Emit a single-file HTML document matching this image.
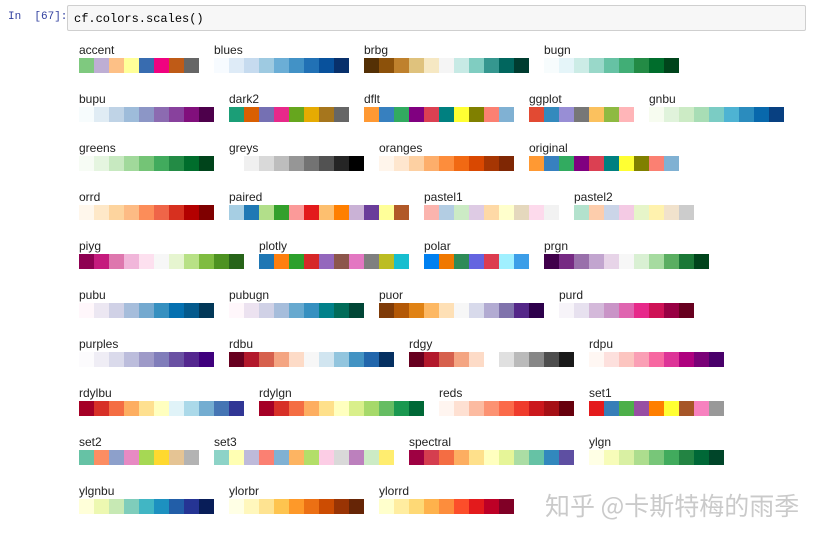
<!DOCTYPE html>
<html><head><meta charset="utf-8"><style>
body{margin:0;width:817px;height:536px;background:#fff;position:relative;overflow:hidden;font-family:"Liberation Sans",Arial,sans-serif}
.prompt{position:absolute;left:8px;top:11px;font:11px "Liberation Mono",monospace;color:#303f9f}
.cell{position:absolute;left:67px;top:5px;width:739px;height:26px;background:#f7f7f7;border:1px solid #cfcfcf;border-radius:2px;box-sizing:border-box;font:12px "Liberation Mono",monospace;color:#000;padding:6px 6px}
.row{position:absolute;left:79px;display:flex;gap:15px}
.it .l{font-size:12px;color:#222;height:15px;line-height:15px}
.sw{display:flex}.sw i{display:block;width:15px;height:15px}
.wm{position:absolute;left:545px;top:487px;font:25px "Noto Sans CJK SC",sans-serif;color:rgba(150,150,150,.5)}
</style></head><body>
<div class="prompt">In&nbsp;&nbsp;[67]:</div>
<div class="cell">cf.colors.scales()</div>
<div id="c"></div>
<div class="wm">知乎 @卡斯特梅的雨季</div>
<script>
const P={
accent:"7fc97f beaed4 fdc086 ffff99 386cb0 f0027f bf5b17 666666",
blues:"f7fbff deebf7 c6dbef 9ecae1 6baed6 4292c6 2171b5 08519c 08306b",
brbg:"543005 8c510a bf812d dfc27d f6e8c3 f5f5f5 c7eae5 80cdc1 35978f 01665e 003c30",
bugn:"f7fcfd e5f5f9 ccece6 99d8c9 66c2a4 41ae76 238b45 006d2c 00441b",
bupu:"f7fcfd e0ecf4 bfd3e6 9ebcda 8c96c6 8c6bb1 88419d 810f7c 4d004b",
dark2:"1b9e77 d95f02 7570b3 e7298a 66a61e e6ab02 a6761d 666666",
dflt:"ff9933 3780bf 32ab60 800080 db4052 008080 ffff33 808000 fb8072 80b1d3",
ggplot:"e24a33 348abd 988ed5 777777 fbc15e 8eba42 ffb5b8",
gnbu:"f7fcf0 e0f3db ccebc5 a8ddb5 7bccc4 4eb3d3 2b8cbe 0868ac 084081",
greens:"f7fcf5 e5f5e0 c7e9c0 a1d99b 74c476 41ab5d 238b45 006d2c 00441b",
greys:"ffffff f0f0f0 d9d9d9 bdbdbd 969696 737373 525252 252525 000000",
oranges:"fff5eb fee6ce fdd0a2 fdae6b fd8d3c f16913 d94801 a63603 7f2704",
original:"ff9933 3780bf 32ab60 800080 db4052 008080 ffff33 808000 fb8072 80b1d3",
orrd:"fff7ec fee8c8 fdd49e fdbb84 fc8d59 ef6548 d7301f b30000 7f0000",
paired:"a6cee3 1f78b4 b2df8a 33a02c fb9a99 e31a1c fdbf6f ff7f00 cab2d6 6a3d9a ffff99 b15928",
pastel1:"fbb4ae b3cde3 ccebc5 decbe4 fed9a6 ffffcc e5d8bd fddaec f2f2f2",
pastel2:"b3e2cd fdcdac cbd5e8 f4cae4 e6f5c9 fff2ae f1e2cc cccccc",
piyg:"8e0152 c51b7d de77ae f1b6da fde0ef f7f7f7 e6f5d0 b8e186 7fbc41 4d9221 276419",
plotly:"1f77b4 ff7f0e 2ca02c d62728 9467bd 8c564b e377c2 7f7f7f bcbd22 17becf",
polar:"0080f0 f07800 2e8b57 6464e0 dc3c50 a0f0ff 3c9ee8",
prgn:"40004b 762a83 9970ab c2a5cf e7d4e8 f7f7f7 d9f0d3 a6dba0 5aae61 1b7837 00441b",
pubu:"fff7fb ece7f2 d0d1e6 a6bddb 74a9cf 3690c0 0570b0 045a8d 023858",
pubugn:"fff7fb ece2f0 d0d1e6 a6bddb 67a9cf 3690c0 02818a 016c59 014636",
puor:"7f3b08 b35806 e08214 fdb863 fee0b6 f7f7f7 d8daeb b2abd2 8073ac 542788 2d004b",
purd:"f7f4f9 e7e1ef d4b9da c994c7 df65b0 e7298a ce1256 980043 67001f",
purples:"fcfbfd efedf5 dadaeb bcbddc 9e9ac8 807dba 6a51a3 54278f 3f007d",
rdbu:"67001f b2182b d6604d f4a582 fddbc7 f7f7f7 d1e5f0 92c5de 4393c3 2166ac 053061",
rdgy:"67001f b2182b d6604d f4a582 fddbc7 ffffff e0e0e0 bababa 878787 4d4d4d 1a1a1a",
rdpu:"fff7f3 fde0dd fcc5c0 fa9fb5 f768a1 dd3497 ae017e 7a0177 49006a",
rdylbu:"a50026 d73027 f46d43 fdae61 fee090 ffffbf e0f3f8 abd9e9 74add1 4575b4 313695",
rdylgn:"a50026 d73027 f46d43 fdae61 fee08b ffffbf d9ef8b a6d96a 66bd63 1a9850 006837",
reds:"fff5f0 fee0d2 fcbba1 fc9272 fb6a4a ef3b2c cb181d a50f15 67000d",
set1:"e41a1c 377eb8 4daf4a 984ea3 ff7f00 ffff33 a65628 f781bf 999999",
set2:"66c2a5 fc8d62 8da0cb e78ac3 a6d854 ffd92f e5c494 b3b3b3",
set3:"8dd3c7 ffffb3 bebada fb8072 80b1d3 fdb462 b3de69 fccde5 d9d9d9 bc80bd ccebc5 ffed6f",
spectral:"9e0142 d53e4f f46d43 fdae61 fee08b ffffbf e6f598 abdda4 66c2a5 3288bd 5e4fa2",
ylgn:"ffffe5 f7fcb9 d9f0a3 addd8e 78c679 41ab5d 238443 006837 004529",
ylgnbu:"ffffd9 edf8b1 c7e9b4 7fcdbb 41b6c4 1d91c0 225ea8 253494 081d58",
ylorbr:"ffffe5 fff7bc fee391 fec44f fe9929 ec7014 cc4c02 993404 662506",
ylorrd:"ffffcc ffeda0 fed976 feb24c fd8d3c fc4e2a e31a1c bd0026 800026"};
const R=[["accent","blues","brbg","bugn"],["bupu","dark2","dflt","ggplot","gnbu"],["greens","greys","oranges","original"],["orrd","paired","pastel1","pastel2"],["piyg","plotly","polar","prgn"],["pubu","pubugn","puor","purd"],["purples","rdbu","rdgy","rdpu"],["rdylbu","rdylgn","reds","set1"],["set2","set3","spectral","ylgn"],["ylgnbu","ylorbr","ylorrd"]];
let h="";R.forEach((r,i)=>{h+='<div class="row" style="top:'+(43+49*i)+'px">';r.forEach(n=>{h+='<div class="it"><div class="l">'+n+'</div><div class="sw">'+P[n].split(" ").map(c=>'<i style="background:#'+c+'"></i>').join("")+'</div></div>'});h+='</div>'});
document.getElementById("c").innerHTML=h;
</script>
</body></html>
